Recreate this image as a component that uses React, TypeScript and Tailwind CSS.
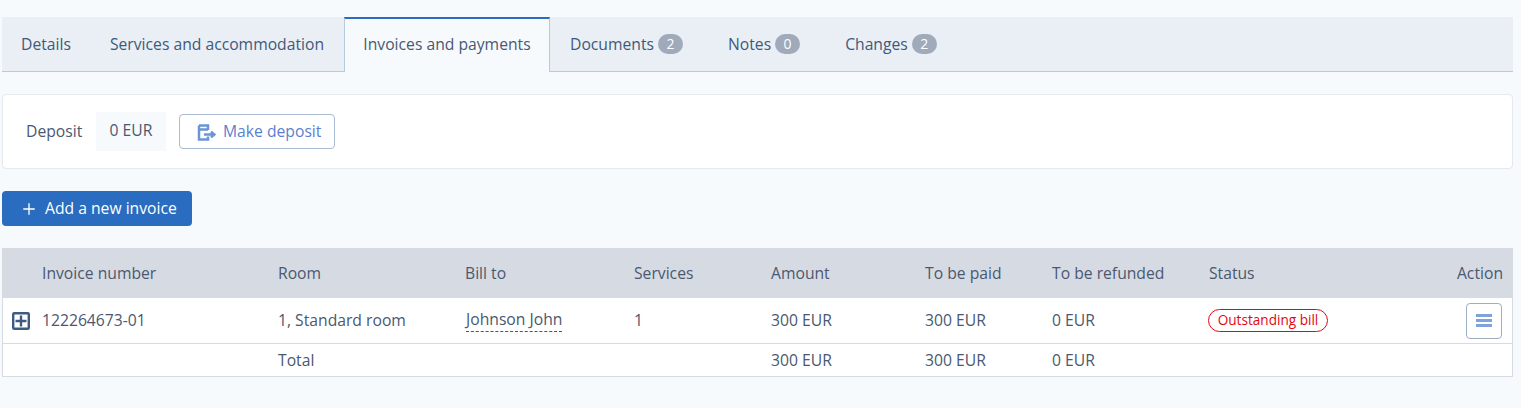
import { Plus } from 'lucide-react';

const tabs = [
  { label: 'Details', width: 'w-[88px]' },
  { label: 'Services and accommodation', width: 'w-[254px]' },
];

const rightTabs = [
  { label: 'Documents', count: 2 },
  { label: 'Notes', count: 0 },
  { label: 'Changes', count: 2 },
];

const gridCols = 'grid grid-cols-[39px_236px_187px_169px_137px_154px_127px_157px_1fr]';

function DepositIcon() {
  return (
    <svg width="22" height="20" viewBox="0 0 22 20" fill="none" className="text-[#6b95d6]">
      <path d="M5 3.5h9v4.5M5 3.5v14h9v-3M5 7.5h9" stroke="currentColor" strokeWidth="2.5" />
      <path d="M10 12.5h10M17 9.6l3.4 2.9-3.4 2.9" stroke="currentColor" strokeWidth="2.4" />
    </svg>
  );
}

function Badge({ count }: { count: number }) {
  return (
    <span className="ml-1 flex h-5 w-[25px] items-center justify-center rounded-full bg-[#a0aabb] text-[14px] text-white">
      {count}
    </span>
  );
}

export default function App() {
  return (
    <div className="h-[408px] overflow-hidden bg-[#f6fafd] pt-[17px] pr-2 pl-0.5 font-['Open_Sans',sans-serif] text-[15.7px] text-[#4a5870]">
      {/* Tabs */}
      <div className="flex h-[55px] border-b border-[#b5cce0] bg-[#eaeff5] text-[#40597a]">
        {tabs.map((t) => (
          <div key={t.label} className={`flex items-center justify-center pt-0.5 ${t.width}`}>
            {t.label}
          </div>
        ))}
        <div className="-mb-px flex w-[206px] items-center justify-center border-x border-t-2 border-x-[#b5cce0] border-t-[#2a6cbf] bg-[#f6fafd] pb-0.5 text-[#4a5870]">
          Invoices and payments
        </div>
        <div className="flex items-center gap-[45px] pl-5">
          {rightTabs.map((t) => (
            <div key={t.label} className="flex items-center">
              <span className="pt-0.5">{t.label}</span>
              <Badge count={t.count} />
            </div>
          ))}
        </div>
      </div>

      {/* Deposit */}
      <div className="mt-[22px] flex h-[75px] items-center rounded-[4px] border border-[#e4e9f0] bg-white pl-[23px]">
        <span className="w-[56px]">Deposit</span>
        <span className="ml-[14px] flex h-[39px] w-[70px] items-center justify-center bg-[#f6fafd] pb-px">0 EUR</span>
        <button className="ml-[13px] flex h-[35px] w-[156px] items-center gap-[7px] rounded-[4px] border border-[#a9bcd3] bg-white pl-[14px] text-[#5b7fd0]">
          <DepositIcon />
          <span>Make deposit</span>
        </button>
      </div>

      {/* Add invoice */}
      <button className="mt-[22px] flex h-[35px] w-[190px] items-center gap-[7px] rounded-[4px] bg-[#2a6cbf] pl-[18px] text-white">
        <Plus size={18} strokeWidth={1.8} />
        <span>Add a new invoice</span>
      </button>

      {/* Table */}
      <div className="mt-[22px] border-x border-b border-[#d6dbe3] bg-white">
        <div className={`${gridCols} h-[50px] items-center bg-[#d6dbe3] pt-0.5`}>
          <div />
          <div>Invoice number</div>
          <div>Room</div>
          <div>Bill to</div>
          <div>Services</div>
          <div>Amount</div>
          <div>To be paid</div>
          <div>To be refunded</div>
          <div className="pr-[9px] text-right">
            <span className="float-left">Status</span>
            Action
          </div>
        </div>
        <div className={`${gridCols} h-[46px] items-center border-b border-[#d6dbe3]`}>
          <div className="flex justify-center pr-1">
            <svg width="18" height="18" viewBox="0 0 18 18" fill="none" className="text-[#3d5a80]">
              <rect x="1.2" y="1.2" width="15.6" height="15.6" rx="1" stroke="currentColor" strokeWidth="2.4" />
              <path d="M9 3.5v11M3.5 9h11" stroke="currentColor" strokeWidth="2.4" />
            </svg>
          </div>
          <div>122264673-01</div>
          <div>1, Standard room</div>
          <div className="pb-0.5 pl-px">
            <span className="border-b border-dashed border-[#3f5579] pb-px">Johnson John</span>
          </div>
          <div>1</div>
          <div>300 EUR</div>
          <div>300 EUR</div>
          <div>0 EUR</div>
          <div className="flex items-center justify-between pr-[10px]">
            <span className="-ml-px flex h-[23px] w-[120px] items-center justify-center rounded-full border border-[#e30613] text-[13.6px] text-[#e30613]">
              Outstanding bill
            </span>
            <button className="flex h-9 w-9 items-center justify-center rounded-[4px] border border-[#a0aec4] bg-white">
              <span className="flex w-4 flex-col gap-0.5">
                <span className="h-[3px] bg-[#7fa3dc]" />
                <span className="h-[3px] bg-[#7fa3dc]" />
                <span className="h-[3px] bg-[#7fa3dc]" />
              </span>
            </button>
          </div>
        </div>
        <div className={`${gridCols} h-[32px] items-center pt-0.5`}>
          <div />
          <div />
          <div>Total</div>
          <div />
          <div />
          <div>300 EUR</div>
          <div>300 EUR</div>
          <div>0 EUR</div>
          <div />
        </div>
      </div>
    </div>
  );
}
